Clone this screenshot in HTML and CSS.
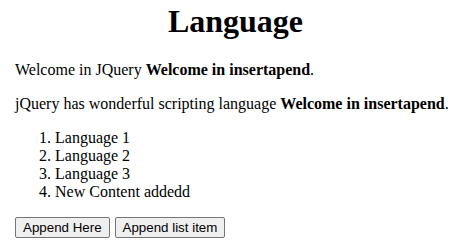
FILE: index.html
```html
<!DOCTYPE html>
<html lang="en">
<head>
    <meta charset="UTF-8">
    <title>Language</title>
    <link rel="stylesheet" href="styles.css">
</head>
<body>
    <div class="page">
        <h1 class="title">Language</h1>
        <p>Welcome in JQuery <b>Welcome in insertapend</b>.</p>
        <p>jQuery has wonderful scripting language <b>Welcome in insertapend</b>.</p>
        <ol class="lang-list">
            <li>Language 1</li>
            <li>Language 2</li>
            <li>Language 3</li>
            <li>New Content addedd</li>
        </ol>
        <div class="actions">
            <button type="button" class="btn">Append Here</button>
            <button type="button" class="btn">Append list item</button>
        </div>
    </div>
</body>
</html>
```

FILE: styles.css
```css
body {
    font-family: "Liberation Serif", "Times New Roman", serif;
    font-size: 16px;
    color: #000;
    background-color: #fff;
    margin: 0;
}

.page {
    padding: 3px 15px 0;
}

.title {
    font-size: 32px;
    text-align: center;
    margin: 0 0 21px;
}

p {
    margin: 16px 0;
}

.lang-list {
    margin: 16px 0;
    padding-left: 40px;
}

.actions {
    display: flex;
    gap: 5px;
}

.btn {
    font-family: "Liberation Sans", Arial, sans-serif;
    font-size: 13.33px;
    color: #000;
    background-color: #efefef;
    border: 1px solid #767676;
    border-radius: 2px;
    padding: 2px 7px;
}
```
